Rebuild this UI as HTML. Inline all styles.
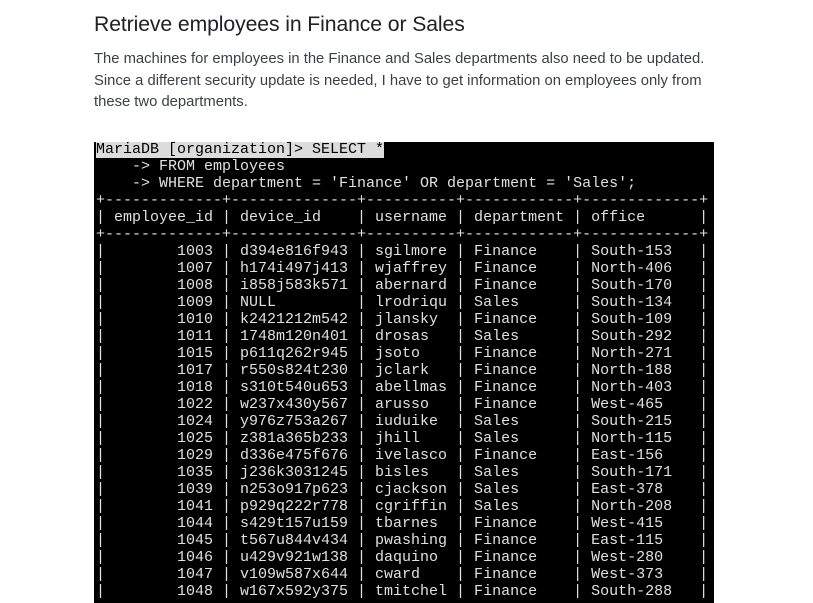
<!DOCTYPE html>
<html><head><style>
html,body{margin:0;background:#fff;width:813px;height:603px;overflow:hidden;font-family:"Liberation Sans",sans-serif;}
h1{position:absolute;left:94px;top:10px;margin:0;font-weight:normal;font-size:21.2px;color:#202124;line-height:30px;letter-spacing:-0.1px}
p{position:absolute;left:94px;top:49px;margin:0;width:622px;font-size:14.8px;line-height:21.5px;color:#3c4043}
.term{position:absolute;left:94px;top:142px;width:620px;height:461px;background:#000;overflow:hidden}
pre{margin:0;position:absolute;left:2px;top:-1px;font-family:"Liberation Mono",monospace;font-size:15px;line-height:17px;color:#e0e0e0;}
.hl{background:#dcdcdc;color:#000;}
</style></head><body>
<h1>Retrieve employees in Finance or Sales</h1>
<p>The machines for employees in the Finance and Sales departments also need to be updated. Since a different security update is needed, I have to get information on employees only from these two departments.</p>
<div class="term"><pre><span class="hl">MariaDB [organization]&gt; SELECT *</span>
    -&gt; FROM employees
    -&gt; WHERE department = 'Finance' OR department = 'Sales';
+-------------+--------------+----------+------------+-------------+
| employee_id | device_id    | username | department | office      |
+-------------+--------------+----------+------------+-------------+
|        1003 | d394e816f943 | sgilmore | Finance    | South-153   |
|        1007 | h174i497j413 | wjaffrey | Finance    | North-406   |
|        1008 | i858j583k571 | abernard | Finance    | South-170   |
|        1009 | NULL         | lrodriqu | Sales      | South-134   |
|        1010 | k2421212m542 | jlansky  | Finance    | South-109   |
|        1011 | 1748m120n401 | drosas   | Sales      | South-292   |
|        1015 | p611q262r945 | jsoto    | Finance    | North-271   |
|        1017 | r550s824t230 | jclark   | Finance    | North-188   |
|        1018 | s310t540u653 | abellmas | Finance    | North-403   |
|        1022 | w237x430y567 | arusso   | Finance    | West-465    |
|        1024 | y976z753a267 | iuduike  | Sales      | South-215   |
|        1025 | z381a365b233 | jhill    | Sales      | North-115   |
|        1029 | d336e475f676 | ivelasco | Finance    | East-156    |
|        1035 | j236k3031245 | bisles   | Sales      | South-171   |
|        1039 | n253o917p623 | cjackson | Sales      | East-378    |
|        1041 | p929q222r778 | cgriffin | Sales      | North-208   |
|        1044 | s429t157u159 | tbarnes  | Finance    | West-415    |
|        1045 | t567u844v434 | pwashing | Finance    | East-115    |
|        1046 | u429v921w138 | daquino  | Finance    | West-280    |
|        1047 | v109w587x644 | cward    | Finance    | West-373    |
|        1048 | w167x592y375 | tmitchel | Finance    | South-288   |
</pre></div>
</body></html>
